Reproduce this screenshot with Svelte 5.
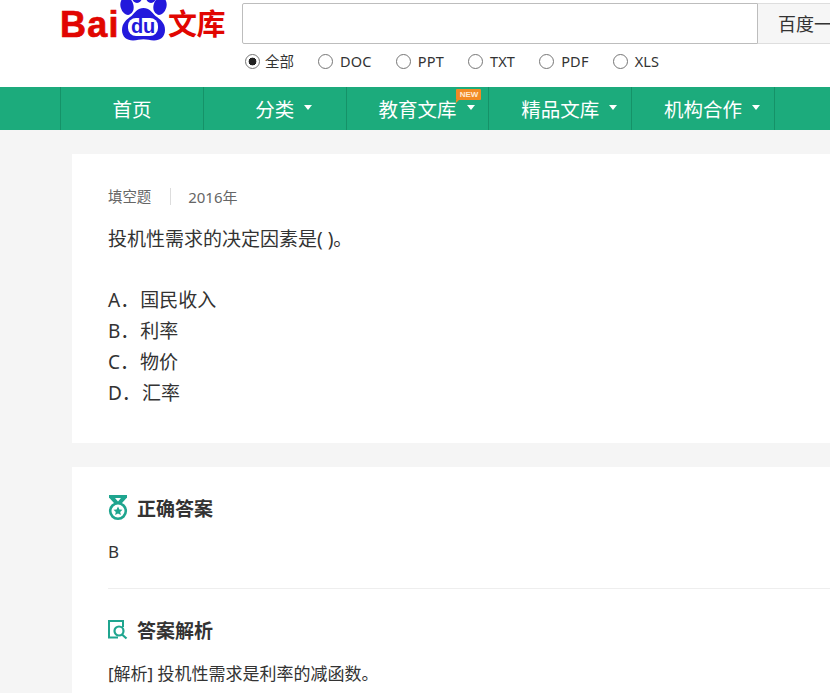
<script>
  const types = ["全部", "DOC", "PPT", "TXT", "PDF", "XLS"];
  const navItems = [
    { label: "首页", caret: false },
    { label: "分类", caret: true },
    { label: "教育文库", caret: true, isNew: true },
    { label: "精品文库", caret: true },
    { label: "机构合作", caret: true }
  ];
  const options = [
    { key: "A", text: "国民收入" },
    { key: "B", text: "利率" },
    { key: "C", text: "物价" },
    { key: "D", text: "汇率" }
  ];
</script>

<div class="page">
  <header class="top">
    <div class="logo">
      <span class="bai">Bai</span>
      <span class="paw">
        <svg width="49" height="41" viewBox="0 0 49 41">
          <ellipse cx="8" cy="6" rx="6.5" ry="9" transform="rotate(-14 8 6)" fill="#2319dc" />
          <ellipse cx="18" cy="-3" rx="5" ry="6" fill="#2319dc" />
          <ellipse cx="32" cy="-3" rx="5" ry="6" fill="#2319dc" />
          <ellipse cx="41" cy="6" rx="6.5" ry="9" transform="rotate(14 41 6)" fill="#2319dc" />
          <path d="M24.5 8c6 0 8 4 12 8 5 3.500 9.500 7 9.500 14 0 7-5 10.500-11 10.500-4 0-7-1.200-10.500-1.200S18 40.500 14 40.500C8 40.500 3 37 3 30c0-7 4.500-10.500 9.500-14 4-4 6-8 12-8z" fill="#2319dc" />
        </svg>
        <span class="du">du</span>
      </span>
      <span class="wenku">文库</span>
    </div>
    <div class="search">
      <div class="search-row">
        <div class="search-input"></div>
        <div class="search-btn">百度一下</div>
      </div>
      <div class="types">
        {#each types as type, i}
          <span class="type" class:first={i === 0}>
            <span class="radio" class:on={i === 0}></span>
            <span>{type}</span>
          </span>
        {/each}
      </div>
    </div>
  </header>

  <nav class="nav">
    <div class="nav-inner">
      {#each navItems as item}
        <div class="nav-item">
          <span class="nav-label">
            {item.label}
            {#if item.caret}<span class="caret"></span>{/if}
            {#if item.isNew}<span class="new">NEW</span>{/if}
          </span>
        </div>
      {/each}
    </div>
  </nav>

  <main class="main">
    <section class="card question">
      <div class="meta">
        <span class="kind">填空题</span>
        <span class="year">2016年</span>
      </div>
      <p class="stem">投机性需求的决定因素是( )。</p>
      <ul class="options">
        {#each options as opt}
          <li><span class="key">{opt.key}．</span>{opt.text}</li>
        {/each}
      </ul>
    </section>

    <section class="card answer">
      <h3 class="title">
        <svg class="ico" width="20" height="26" viewBox="0 0 20 26">
          <path d="M1 0h18v2.500l-5 5.500H6L1 2.500z" fill="#1fa58f" />
          <path d="M7 3h6l-3 3.500z" fill="#fff" />
          <circle cx="10" cy="16" r="7.800" fill="#fff" stroke="#1fa58f" stroke-width="2.600" />
          <path d="M10 11.500l1.400 2.900 3.100.4-2.300 2.100.7 3.100-2.900-1.600-2.900 1.600.7-3.100-2.300-2.100 3.100-.4z" fill="#1fa58f" />
        </svg>
        正确答案
      </h3>
      <div class="letter">B</div>
      <div class="rule"></div>
      <h3 class="title second">
        <svg class="ico" width="20" height="20" viewBox="0 0 20 20">
          <path d="M10 17.500H1V1h14v6" fill="none" stroke="#1fa58f" stroke-width="2" />
          <circle cx="11" cy="11" r="4.500" fill="none" stroke="#1fa58f" stroke-width="2.200" />
          <path d="M14 14.500l4.500 4" stroke="#1fa58f" stroke-width="2.200" />
        </svg>
        答案解析
      </h3>
      <p class="analysis">[解析] 投机性需求是利率的减函数。</p>
    </section>
  </main>
</div>

<style>
  :global(body) {
    margin: 0;
    background: #f5f5f5;
    overflow: hidden;
  }
  .page {
    width: 830px;
    height: 693px;
    overflow: hidden;
    font-family: "Noto Sans", "Noto Sans CJK SC", sans-serif;
    color: #333;
  }
  .top {
    display: flex;
    height: 87px;
    background: #fff;
    padding-left: 60px;
    box-sizing: border-box;
  }
  .logo {
    display: flex;
    align-items: flex-start;
    width: 182px;
    height: 44px;
    overflow: hidden;
    color: #e10601;
    font-family: "Liberation Sans", "Noto Sans CJK SC", sans-serif;
    font-weight: 700;
  }
  .bai {
    width: 59px;
    flex: none;
    font-size: 36px;
    line-height: 50px;
    letter-spacing: 1.3px;
    -webkit-text-stroke: 0.7px #e10601;
  }
  .paw {
    position: relative;
    width: 49px;
    height: 44px;
    flex: none;
  }
  .paw svg {
    display: block;
  }
  .du {
    position: absolute;
    left: 9px;
    top: 18px;
    width: 30px;
    height: 18px;
    background: #fff;
    border-radius: 8px;
    color: #2319dc;
    text-align: center;
    font-size: 20px;
    line-height: 17px;
    letter-spacing: -0.3px;
  }
  .wenku {
    font-size: 29px;
    line-height: 50px;
    white-space: nowrap;
    letter-spacing: -0.5px;
  }
  .search {
    flex: 1;
    min-width: 0;
    padding-top: 3px;
    overflow: hidden;
  }
  .search-row {
    display: flex;
    width: 640px;
    height: 41px;
  }
  .search-input {
    width: 516px;
    box-sizing: border-box;
    border: 1px solid #bdbdbd;
    border-radius: 2px 0 0 2px;
    background: #fff;
  }
  .search-btn {
    flex: 1;
    box-sizing: border-box;
    border: 1px solid #dedede;
    border-left: 0;
    background: #f6f6f6;
    padding-left: 20px;
    font-size: 18px;
    line-height: 40px;
    color: #333;
    white-space: nowrap;
  }
  .types {
    display: flex;
    gap: 24px;
    margin-top: 8px;
    padding-left: 3px;
    font-size: 14.5px;
    line-height: 19px;
    color: #333;
  }
  .type {
    display: flex;
    align-items: center;
    gap: 7px;
    letter-spacing: 0.2px;
  }
  .type.first {
    gap: 5px;
    letter-spacing: 0;
  }
  .radio {
    box-sizing: border-box;
    width: 15px;
    height: 15px;
    border: 1px solid #767676;
    border-radius: 50%;
    background: #fff;
  }
  .radio.on {
    background: radial-gradient(circle, #222 0 3.6px, #fff 4.2px);
  }
  .nav {
    height: 43px;
    background: #1cab7c;
  }
  .nav-inner {
    display: flex;
    margin-left: 60px;
    width: 714px;
    border-right: 1px solid #159268;
  }
  .nav-item {
    display: flex;
    align-items: center;
    justify-content: center;
    flex: 1;
    height: 43px;
    border-left: 1px solid #159268;
    color: #fff;
    font-size: 19.5px;
  }
  .nav-label {
    position: relative;
  }
  .caret {
    position: absolute;
    left: 100%;
    top: 11px;
    margin-left: 10px;
    width: 0;
    height: 0;
    border-left: 4.5px solid transparent;
    border-right: 4.5px solid transparent;
    border-top: 5px solid #fff;
  }
  .new {
    position: absolute;
    left: 78px;
    top: -5px;
    width: 25px;
    height: 11px;
    background: #f28a25;
    color: #ffe9d2;
    font-family: "Liberation Sans", sans-serif;
    font-size: 8px;
    font-weight: 700;
    line-height: 12px;
    text-align: center;
    border-radius: 1px;
  }
  .new::after {
    content: "";
    position: absolute;
    left: 0;
    top: 100%;
    border-top: 3px solid #f28a25;
    border-right: 3px solid transparent;
  }
  .main {
    padding: 24px 0 0 72px;
    display: flex;
    flex-direction: column;
    gap: 24px;
  }
  .card {
    background: #fff;
    width: 900px;
    box-sizing: border-box;
    padding-left: 36px;
  }
  .question {
    height: 289px;
    padding-top: 32px;
  }
  .meta {
    display: flex;
    align-items: center;
    height: 20px;
    font-size: 14.4px;
    color: #666;
  }
  .kind {
    padding-right: 19px;
    border-right: 1px solid #ddd;
    line-height: 17px;
  }
  .year {
    padding-left: 17px;
    font-size: 15px;
  }
  .stem {
    margin: 20px 0 0;
    font-size: 19px;
    line-height: 26px;
    color: #333;
  }
  .options {
    list-style: none;
    margin: 32.6px 0 0;
    padding: 0;
    font-size: 19px;
    line-height: 31.3px;
  }
  .key {
    margin-right: 1px;
  }
  .answer {
    padding-top: 28px;
    min-height: 400px;
  }
  .title {
    display: flex;
    align-items: center;
    gap: 9px;
    margin: 0;
    height: 26px;
    font-size: 19px;
    font-weight: 700;
    color: #333;
  }
  .letter {
    margin-top: 20px;
    font-size: 17px;
    line-height: 22px;
    color: #333;
  }
  .rule {
    height: 1px;
    background: #eee;
    margin-top: 25px;
    width: 760px;
  }
  .second {
    margin-top: 28px;
  }
  .analysis {
    margin: 18px 0 0;
    font-size: 17px;
    line-height: 26px;
    color: #333;
  }
</style>
